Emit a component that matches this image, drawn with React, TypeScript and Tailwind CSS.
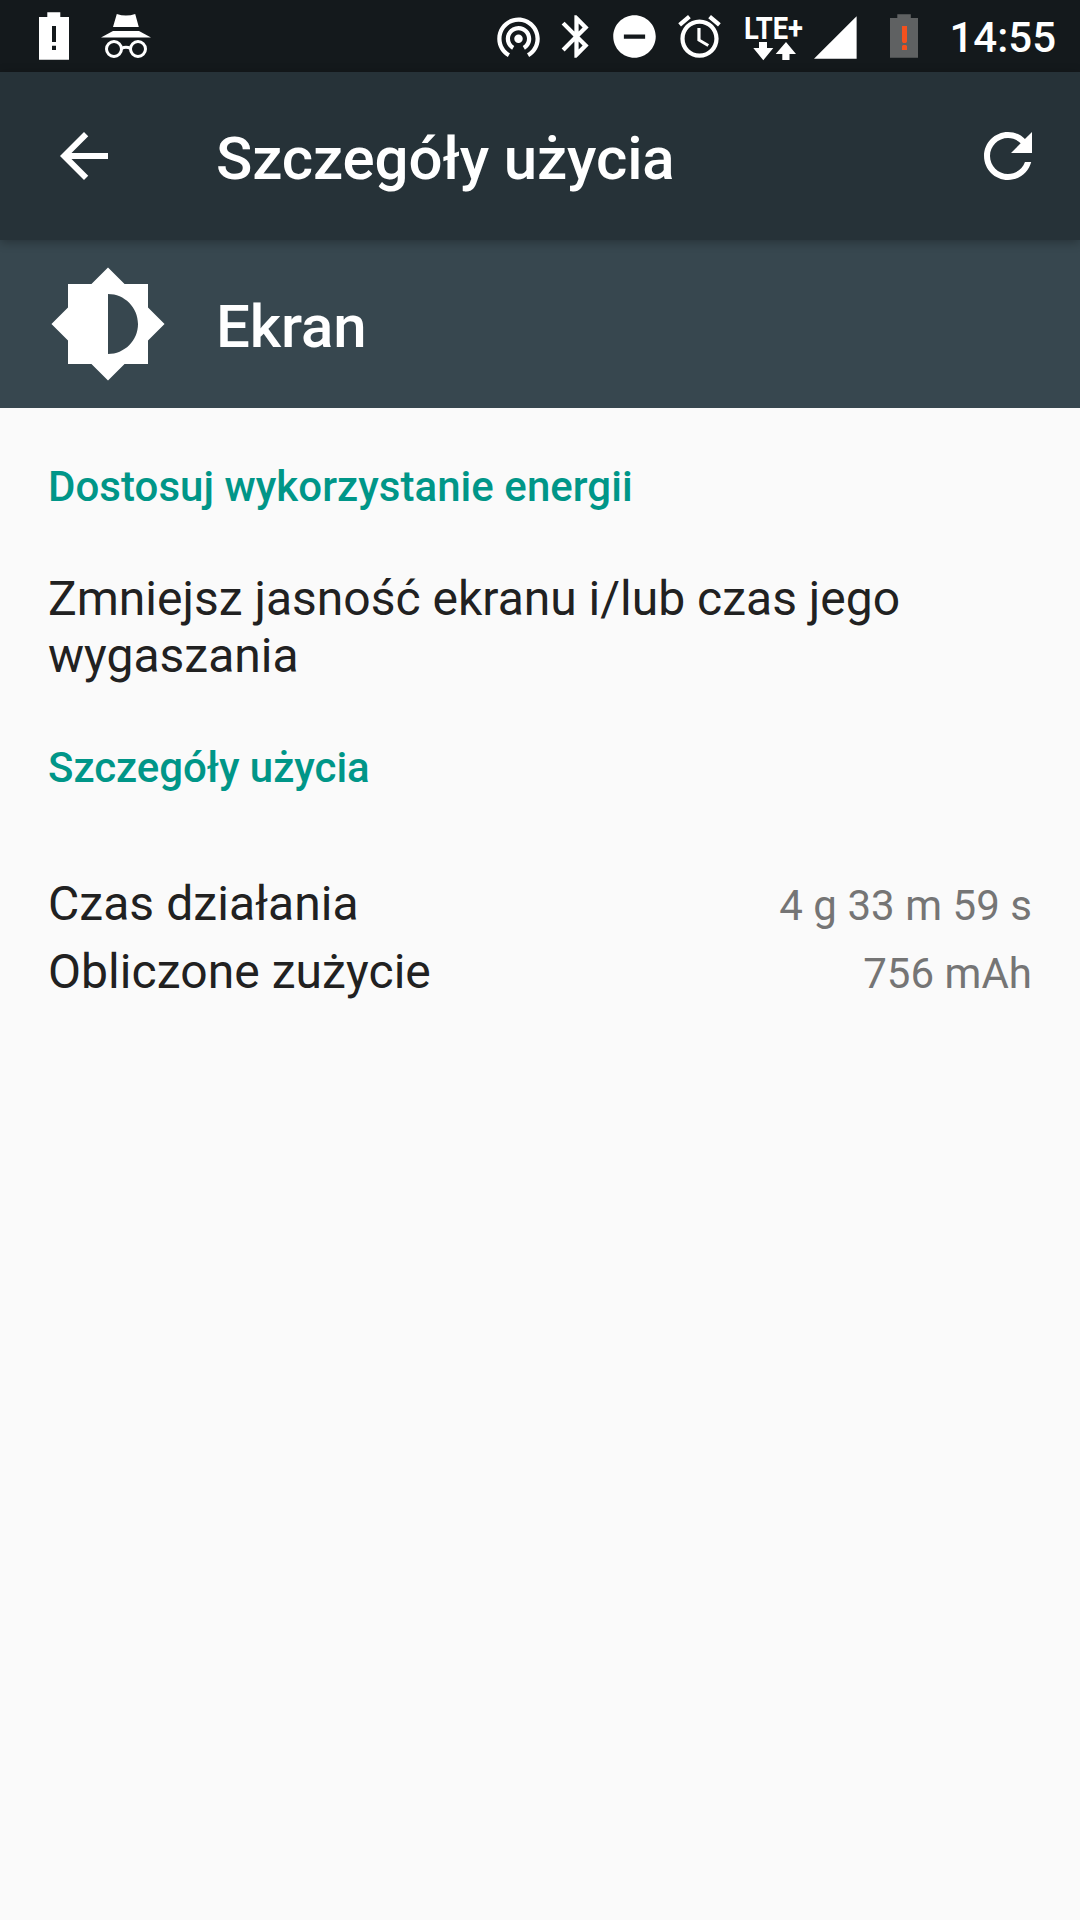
import type { ReactNode } from "react"

type IconProps = {
  className?: string
  children: ReactNode
}

// 24-unit grid icon, sized by className
function Icon({ className, children }: IconProps) {
  return (
    <svg className={className} viewBox="0 0 24 24" fill="currentColor" xmlns="http://www.w3.org/2000/svg">
      {children}
    </svg>
  )
}

function BatteryNotificationIcon() {
  return (
    <svg className="w-[30px] h-[48px] mt-3 shrink-0" viewBox="0 0 30 48" xmlns="http://www.w3.org/2000/svg">
      <path d="M8.3 0.3h13V5H30v42.7H0V5h8.3z" fill="#fff" />
      <path d="M13 14h4v16h-4zM13 33.7h4V38h-4z" fill="#14191c" />
    </svg>
  )
}

function IncognitoIcon() {
  return (
    <svg className="w-[50px] h-[48px] mt-3 ml-[32px] shrink-0" viewBox="0 0 50 48" xmlns="http://www.w3.org/2000/svg">
      <path d="M15.8 2Q25 5.2 34.2 2L37.8 15H12z" fill="#fff" />
      <path d="M12 19h26l12 6.4H0z" fill="#fff" />
      <g fill="none" stroke="#fff" strokeWidth="3">
        <circle cx="13" cy="37" r="7.5" />
        <circle cx="37" cy="37" r="7.5" />
        <path d="M20.5 36.5Q25 34 29.5 36.5" />
      </g>
    </svg>
  )
}

function NetworkIcon() {
  return (
    <svg
      className="w-[58px] h-[60px] mt-[2px] ml-[20px] shrink-0 overflow-visible"
      viewBox="0 -12 58 60"
      fill="#fff"
      xmlns="http://www.w3.org/2000/svg"
    >
      <text
        x="-1"
        y="25"
        textLength="59"
        lengthAdjust="spacingAndGlyphs"
        fontFamily="Roboto, sans-serif"
        fontWeight="700"
        fontSize="31"
      >
        LTE+
      </text>
      <path d="M14 28h8v6h6.3L18.3 46.3 8.3 34H14z" />
      <path d="M41 28L51 40h-6.5v6H37.3v-6H30.7z" />
    </svg>
  )
}

function StatusBar() {
  return (
    <div className="flex h-[72px] bg-[#14191c] text-white pl-[39px] pr-[24px]">
      <BatteryNotificationIcon />
      <IncognitoIcon />
      <div className="flex ml-auto">
        <Icon className="w-[51px] h-[51px] mt-[11px] shrink-0">
          <path d="M12 11c-1.1 0-2 .9-2 2s.9 2 2 2 2-.9 2-2-.9-2-2-2zm6 2c0-3.31-2.69-6-6-6s-6 2.69-6 6c0 2.22 1.21 4.15 3 5.19l1-1.74c-1.19-.7-2-1.97-2-3.45 0-2.21 1.79-4 4-4s4 1.79 4 4c0 1.48-.81 2.75-2 3.45l1 1.74c1.79-1.04 3-2.97 3-5.19zM12 3C6.48 3 2 7.48 2 13c0 3.7 2.01 6.92 4.99 8.65l1-1.73C5.61 18.53 4 15.96 4 13c0-4.42 3.58-8 8-8s8 3.58 8 8c0 2.96-1.61 5.53-4 6.92l1 1.73c2.99-1.73 5-4.95 5-8.65 0-5.52-4.48-10-10-10z" />
        </Icon>
        <Icon className="w-[51px] h-[51px] mt-[11px] ml-[7px] shrink-0">
          <path d="M17.71 7.71L12 2h-1v7.59L6.41 5 5 6.41 10.59 12 5 17.59 6.41 19 11 14.41V22h1l5.71-5.71-4.3-4.29 4.3-4.29zM13 5.83l1.88 1.88L13 9.59V5.83zm1.88 10.46L13 18.17v-3.76l1.88 1.88z" />
        </Icon>
        <Icon className="w-[51px] h-[51px] mt-[11px] ml-[7px] shrink-0">
          <path d="M12 2C6.48 2 2 6.48 2 12s4.48 10 10 10 10-4.48 10-10S17.52 2 12 2zm5 11H7v-2h10v2z" />
        </Icon>
        <Icon className="w-[51px] h-[51px] mt-[11px] ml-[14px] shrink-0">
          <path d="M22 5.72l-4.6-3.86-1.29 1.53 4.6 3.86L22 5.72zM7.88 3.39L6.6 1.86 2 5.71l1.29 1.53 4.59-3.85zM12.5 8H11v6l4.75 2.85.75-1.23-4-2.37V8zM12 4c-4.97 0-9 4.03-9 9s4.02 9 9 9c4.97 0 9-4.03 9-9s-4.03-9-9-9zm0 16c-3.87 0-7-3.13-7-7s3.13-7 7-7 7 3.13 7 7-3.13 7-7 7z" />
        </Icon>
        <NetworkIcon />
        <svg className="w-[43px] h-[43px] mt-4 ml-[11px] shrink-0" viewBox="0 0 43 43" xmlns="http://www.w3.org/2000/svg">
          <path d="M0 42.8L42.6 0.2V42.8z" fill="#fff" />
        </svg>
        <svg className="w-[28px] h-[44px] mt-[14px] ml-[33px] shrink-0" viewBox="0 0 28 44" xmlns="http://www.w3.org/2000/svg">
          <path d="M7.3 0.3h13.5V4H28v39.7H0V4h7.3z" fill="#5f6162" />
          <path d="M12 12h5v15.5l-1 1.5h-3l-1-1.5zM13 31h3l1 1v4h-5v-4z" fill="#f4511e" />
        </svg>
        <span className="ml-[31px] pt-[2px] w-[107px] text-right text-[42px] leading-[72px] font-medium">14:55</span>
      </div>
    </div>
  )
}

function AppBar() {
  return (
    <header className="relative flex items-center h-[168px] bg-[#263238] text-white pl-[48px] pr-[36px] shadow-[0_2px_10px_rgba(0,0,0,0.3)]">
      <Icon className="w-[72px] h-[72px] shrink-0">
        <path d="M20 11H7.83l5.59-5.59L12 4l-8 8 8 8 1.41-1.41L7.83 13H20v-2z" />
      </Icon>
      <h1 className="ml-[96px] pt-[5px] text-[60px] leading-[72px] tracking-[-0.12px] font-medium">Szczegóły użycia</h1>
      <Icon className="w-[72px] h-[72px] ml-auto shrink-0">
        <path d="M17.65 6.35C16.2 4.9 14.21 4 12 4c-4.42 0-7.99 3.58-7.99 8s3.57 8 7.99 8c3.73 0 6.84-2.55 7.73-6h-2.08c-.82 2.33-3.04 4-5.65 4-3.31 0-6-2.69-6-6s2.69-6 6-6c1.66 0 3.14.69 4.22 1.78L13 11h7V4l-2.35 2.35z" />
      </Icon>
    </header>
  )
}

function DetailRow({ label, value }: { label: string; value: string }) {
  return (
    <div className="flex items-baseline justify-between h-[68px]">
      <span className="text-[48px] leading-[68px] tracking-[0.06px] text-[#212121]">{label}</span>
      <span className="text-[42px] leading-[60px] tracking-[0.04px] text-[#757575]">{value}</span>
    </div>
  )
}

export default function App() {
  return (
    <div className="w-[1080px] h-[1920px] flex flex-col overflow-hidden bg-[#fafafa] font-[Roboto,sans-serif]">
      <StatusBar />
      <AppBar />

      {/* Screen usage header */}
      <section className="flex items-center h-[168px] bg-[#37474f] text-white px-[48px]">
        <Icon className="w-[120px] h-[120px] shrink-0">
          <path d="M20 15.31L23.31 12 20 8.69V4h-4.69L12 .69 8.69 4H4v4.69L.69 12 4 15.31V20h4.69L12 23.31 15.31 20H20v-4.69zM12 18V6c3.31 0 6 2.69 6 6s-2.69 6-6 6z" />
        </Icon>
        <h2 className="ml-[48px] pt-[5px] text-[60px] leading-[72px] tracking-[-0.12px] font-medium">Ekran</h2>
      </section>

      {/* Details */}
      <main className="px-[48px] pt-[55px]">
        <h3 className="text-[42px] leading-[48px] tracking-[0.04px] font-medium text-[#009688]">
          Dostosuj wykorzystanie energii
        </h3>
        <p className="mt-[59px] text-[48px] leading-[57px] text-[#212121]">
          Zmniejsz jasność ekranu i/lub czas jego wygaszania
        </p>
        <h3 className="mt-[60px] text-[42px] leading-[48px] tracking-[-0.04px] font-medium text-[#009688]">
          Szczegóły użycia
        </h3>
        <div className="mt-[78px]">
          <DetailRow label="Czas działania" value="4 g 33 m 59 s" />
          <DetailRow label="Obliczone zużycie" value="756 mAh" />
        </div>
      </main>
    </div>
  )
}
